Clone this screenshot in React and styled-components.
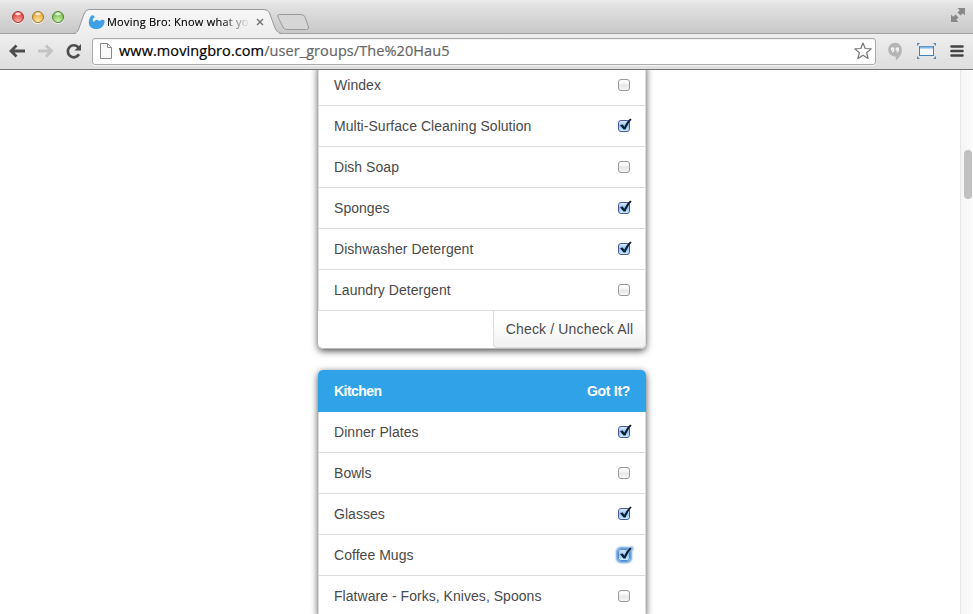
import React from "react";
import styled, { createGlobalStyle, css } from "styled-components";

const Global = createGlobalStyle`
  * { box-sizing: border-box; }
  html, body { margin: 0; padding: 0; background: #fff; overflow: hidden; }
`;

const Browser = styled.div`
  width: 973px;
  height: 614px;
  display: flex;
  flex-direction: column;
  overflow: hidden;
  background: #fff;
`;

const TabStrip = styled.header`
  height: 33px;
  flex: none;
  display: flex;
  background: linear-gradient(#ececec 0, #e2e2e2 5px, #c9c9c9 32px);
`;

const WindowButtons = styled.div`
  display: flex;
  gap: 8px;
  padding: 11px 0 0 12px;
  width: 75px;
  flex: none;
`;

const lights = {
  red: ["#e0443e", "#fbb0a8", "#a83430"],
  yellow: ["#e9a93a", "#fdeba6", "#a87528"],
  green: ["#79bd50", "#d3f4b4", "#4f8434"],
};

const Light = styled.span`
  width: 12px;
  height: 12px;
  border-radius: 50%;
  border: 1px solid ${(p) => lights[p.$color][2]};
  background: radial-gradient(ellipse 4px 2px at 50% 18%, #fffc 0 40%, transparent 100%),
    radial-gradient(circle at 50% 95%, ${(p) => lights[p.$color][1]} 0, ${(p) => lights[p.$color][0]} 75%);
  box-shadow: 0 1px 0 #f4f4f4;
`;

const Tab = styled.div`
  position: relative;
  width: 205px;
  height: 33px;
  flex: none;
`;

const TabShape = styled.svg`
  position: absolute;
  left: 0;
  top: 0;
  overflow: visible;
`;

const TabContent = styled.div`
  position: relative;
  display: flex;
  align-items: center;
  height: 24px;
  margin-top: 10px;
  padding-left: 13px;
`;

const TabTitle = styled.span`
  width: 143px;
  margin-left: 2px;
  white-space: nowrap;
  font: 11px/16px "Open Sans", "Noto Sans", sans-serif;
  letter-spacing: 0.23px;
  color: #000;
  -webkit-text-stroke: 0.15px #000;
  mask-image: linear-gradient(90deg, #000 112px, transparent 143px);
`;

const CloseIcon = styled.svg`
  margin-left: 6px;
`;

const NewTab = styled.svg`
  margin: 13px 0 0 -5px;
`;

const Fullscreen = styled.svg`
  margin: 7px 7px 0 auto;
`;

const Toolbar = styled.nav`
  height: 37px;
  flex: none;
  display: flex;
  align-items: center;
  padding: 0 9px 1px 8px;
  border-bottom: 1px solid #757575;
  border-top: 1px solid #a0a0a0;
  background: linear-gradient(#eeeeee, #dedede);
`;

const NavIcon = styled.svg`
  flex: none;
  margin-right: ${(p) => p.$gap}px;
`;

const AddressBar = styled.div`
  width: 784px;
  height: 27px;
  flex: none;
  display: flex;
  align-items: center;
  padding: 0 3px 0 7px;
  border: 1px solid #aaa;
  border-radius: 3px;
  background: #fff;
  box-shadow: inset 0 1px 1px #0001, 0 1px 0 #f6f6f6;
`;

const Url = styled.span`
  margin: 0 auto 0 7px;
  white-space: nowrap;
  font: 14.5px/20px "Open Sans", "Noto Sans", sans-serif;
  letter-spacing: ${(p) => p.$spacing || 0}px;
  color: #000;
  -webkit-text-stroke: 0.2px;
`;

const UrlPath = styled.span`
  color: #666;
`;

const Extensions = styled.div`
  display: flex;
  align-items: center;
  gap: 14px;
  margin-left: 11px;
`;

const Viewport = styled.div`
  flex: 1;
  min-height: 0;
  display: flex;
  justify-content: space-between;
  overflow: hidden;
`;

const Page = styled.main`
  width: 646px;
  padding-left: 318px;
  margin-top: -5px;
  font: 15px/20px "Liberation Sans", Arial, sans-serif;
  color: #4a4a4a;
`;

const Card = styled.section`
  width: 328px;
  margin-bottom: 21px;
  border-radius: ${(p) => (p.$continued ? "0 0 5px 5px" : "5px")};
  background: #fff;
  box-shadow: 0 2px 7px rgba(0, 0, 0, 0.7);
`;

const Row = styled.div`
  height: 41px;
  display: flex;
  justify-content: space-between;
  align-items: center;
  padding: 0 15px;
  border: 1px solid #ddd;
  border-top: 0;
`;

const CardHeader = styled.div`
  height: 42px;
  display: flex;
  justify-content: space-between;
  align-items: center;
  padding: 0 16px;
  border-radius: 5px 5px 0 0;
  background: #30a3e8;
  color: #fff;
  font-weight: bold;
  font-size: 14px;
`;

const Label = styled.span`
  white-space: nowrap;
  font-size: 14px;
  letter-spacing: ${(p) => p.$spacing || 0}px;
`;

const CardFooter = styled.div`
  height: 38px;
  display: flex;
  justify-content: flex-end;
  border-bottom: 1px solid #bbb;
  border-radius: 0 0 5px 5px;
`;

const CheckAll = styled.button`
  width: 153px;
  height: 37px;
  padding: 0 0 1px;
  border: 1px solid #ddd;
  border-top: 0;
  border-radius: 0 0 5px 4px;
  background: linear-gradient(#fff 30%, #f1f1f1);
  color: #4a4a4a;
  font: 14px "Liberation Sans", Arial, sans-serif;
  letter-spacing: 0.15px;
  white-space: nowrap;
`;

const Checkbox = styled.span`
  width: 12px;
  height: 12px;
  flex: none;
  border: 1px solid #999;
  border-radius: 3px;
  background: linear-gradient(#fff 20%, #e8e8e8 55%, #f7f7f7);
  ${(p) =>
    p.$checked &&
    css`
      border-color: #4b58a0;
      background: linear-gradient(#d8eafb, #91c3f3 50%, #c8f0ff);
    `}
  ${(p) =>
    p.$focused &&
    css`
      border-color: #5488c8;
      box-shadow: 0 0 2px 2px #609fdd;
    `}
`;

const CheckMark = styled.svg`
  display: block;
  margin: -3px 0 0 -1px;
  overflow: visible;
`;

const Scrollbar = styled.div`
  width: 13px;
  padding: 80px 0 0 3px;
  border-left: 1px solid #e6e6e6;
  background: linear-gradient(90deg, #f5f5f5, #fcfcfc);
`;

const ScrollThumb = styled.div`
  width: 8px;
  height: 49px;
  border-radius: 4px;
  background: #c1c1c1;
`;

const cleaning = [
  ["Windex", false],
  ["Multi-Surface Cleaning Solution", true],
  ["Dish Soap", false],
  ["Sponges", true],
  ["Dishwasher Detergent", true],
  ["Laundry Detergent", false],
];

const kitchen = [
  ["Dinner Plates", true],
  ["Bowls", false],
  ["Glasses", true],
  ["Coffee Mugs", true, true],
  ["Flatware - Forks, Knives, Spoons", false],
];

function Items({ items }) {
  return items.map(([name, checked, focused]) => (
    <Row key={name}>
      <Label $spacing={0.04}>{name}</Label>
      <Checkbox $checked={checked} $focused={focused}>
        {checked && (
          <CheckMark width="14" height="14">
            {focused && <path d="M10 4L13.500 1.500" fill="none" stroke="#75aee6" strokeWidth="5" strokeLinecap="round" opacity=".6" />}
            <path d="M2 7L4.700 6.600L6.300 8.700C7.800 5.800 9.600 3 12.200 .6L13.600 1.400C11 4.300 9 7.700 7.500 11.500H5.500Z" fill="#0d1b33" />
          </CheckMark>
        )}
      </Checkbox>
    </Row>
  ));
}

export default function App() {
  return (
    <Browser>
      <Global />
      <TabStrip>
        <WindowButtons>
          <Light $color="red" />
          <Light $color="yellow" />
          <Light $color="green" />
        </WindowButtons>
        <Tab>
          <TabShape width="205" height="34">
            <defs>
              <linearGradient id="tab" x2="0" y2="1">
                <stop stopColor="#f7f7f7" />
                <stop offset="1" stopColor="#eeeeee" />
              </linearGradient>
            </defs>
            <path d="M-1 33.500C2 33 3 31 4 28L9 14Q10.500 9.500 14 9.500H189Q193 9.500 194.500 13L200 28Q202 33 206 33.500" fill="url(#tab)" stroke="#999" />
            <path d="M1 33.500H204" stroke="#eee" strokeWidth="2" />
          </TabShape>
          <TabContent>
            <svg width="17" height="15" viewBox="0 0 17 15">
              <path d="M3.500.500C5 0 6.500 1 6.600 2.500L4.800 3.700C4.500 5.200 5 6.500 6 7C7.500 4 10 4.200 11.200 6.200C13 4.700 15.500 4.200 16.500 5.500C17 9.500 14 13.500 9.500 14C5 14.500 1 12 .8 8C.7 5 1.500 2 3.500.500Z" fill="#3fa0e5" />
            </svg>
            <TabTitle>Moving Bro: Know what yo</TabTitle>
            <CloseIcon width="8" height="8">
              <path d="M1 1l6 6M7 1L1 7" stroke="#777" strokeWidth="1.500" />
            </CloseIcon>
          </TabContent>
        </Tab>
        <NewTab width="36" height="19">
          <path d="M4.500 1.500H26Q29 1.500 30 4L33.500 14Q34 16.500 31.500 16.500H12Q9 16.500 8 14L3 4Q2 1.500 4.500 1.500Z" fill="#d6d6d6" stroke="#999" />
        </NewTab>
        <Fullscreen width="16" height="16">
          <path d="M7.500 1H15V8.500L12.800 6.300L10.600 8.500L7.500 5.400L9.700 3.200ZM1 7.500L3.200 9.700L5.400 7.500L8.500 10.600L6.300 12.800L8.500 15H1Z" fill="#888" />
          <path d="M6 6L10 10" stroke="#d9d9d9" strokeWidth="1.500" />
        </Fullscreen>
      </TabStrip>
      <Toolbar>
        <NavIcon $gap={11} width="18" height="16">
          <path d="M17 8H4M8.500 2.500L3 8l5.500 5.500" fill="none" stroke="#4d4d4d" strokeWidth="2.800" />
        </NavIcon>
        <NavIcon $gap={11} width="17" height="16">
          <path d="M1 8H14M9 2.500L14.500 8L9 13.500" fill="none" stroke="#c3c3c3" strokeWidth="2.800" />
        </NavIcon>
        <NavIcon $gap={10} width="17" height="17">
          <path d="M13.500 4.500A6 6 0 1 0 14 11.300" fill="none" stroke="#4d4d4d" strokeWidth="2.700" />
          <path d="M16 1V7.500H9.500Z" fill="#4d4d4d" />
        </NavIcon>
        <AddressBar>
          <NavIcon $gap={0} width="12" height="16">
            <path d="M.5.500H7.500L11.500 4.500V15.500H.500ZM7.500.500V4.500H11.500" fill="#fafafa" stroke="#888" />
          </NavIcon>
          <Url $spacing={0.08}>
            www.movingbro.com<UrlPath>/user_groups/The%20Hau5</UrlPath>
          </Url>
          <NavIcon $gap={0} width="18" height="18">
            <path d="M9 1L11.200 6.500L17.200 6.900L12.600 10.700L14.100 16.500L9 13.300L3.900 16.500L5.400 10.700L.8 6.900L6.800 6.500Z" fill="#fff" stroke="#777" strokeLinejoin="round" strokeWidth="1.200" />
          </NavIcon>
        </AddressBar>
        <Extensions>
          <svg width="16" height="19">
            <path d="M8 .8A6.900 6.900 0 0 1 14.900 7.700C14.900 12 12.500 16 8.800 18.300V14.600H8A6.900 6.900 0 0 1 8 .8Z" fill="#b5b5b5" />
            <path d="M4 5.500H7.300V8.500Q7 10.500 5 10.800V9.500Q5.800 9 5.800 8.500H4ZM8.700 5.500H12V8.500Q11.700 10.500 9.700 10.800V9.500Q10.500 9 10.500 8.500H8.700Z" fill="#f1f1f1" />
          </svg>
          <svg width="19" height="18">
            <rect x="2.500" y="4.500" width="14" height="9" fill="#f4f7fa" stroke="#3e80b9" />
            <path d="M3 5.500H16" stroke="#82b4df" strokeWidth="2" />
            <path d="M0 1H3L0 4ZM19 1H16L19 4ZM0 17H3L0 14ZM19 17H16L19 14Z" fill="#4d89ba" />
          </svg>
          <svg width="14" height="14">
            <path d="M1.500 2.500H12.500M1.500 7H12.500M1.500 11.500H12.500" stroke="#444" strokeWidth="2.600" strokeLinecap="round" />
          </svg>
        </Extensions>
      </Toolbar>
      <Viewport>
        <Page>
          <Card $continued>
            <Items items={cleaning} />
            <CardFooter>
              <CheckAll>Check / Uncheck All</CheckAll>
            </CardFooter>
          </Card>
          <Card>
            <CardHeader>
              <Label $spacing={-0.55}>Kitchen</Label>
              <Label $spacing={-0.3}>Got It?</Label>
            </CardHeader>
            <Items items={kitchen} />
          </Card>
        </Page>
        <Scrollbar>
          <ScrollThumb />
        </Scrollbar>
      </Viewport>
    </Browser>
  );
}
